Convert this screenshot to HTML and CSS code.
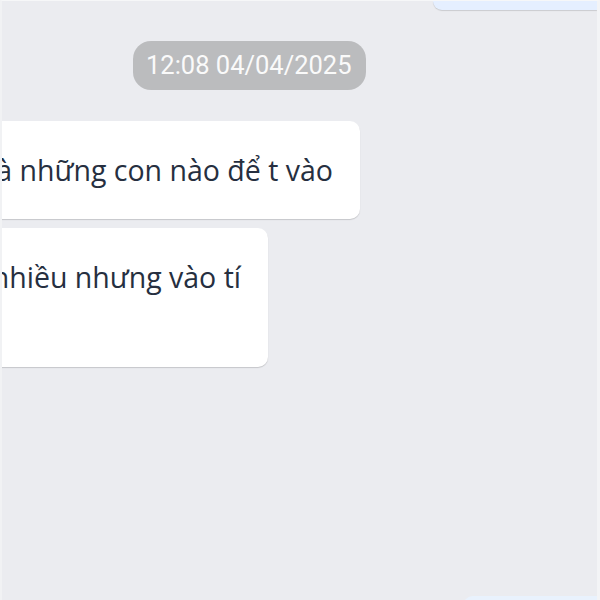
FILE: index.html
```html
<!DOCTYPE html>
<html lang="vi">
<head>
<meta charset="utf-8">
<title>Chat</title>
<link rel="stylesheet" href="styles.css">
</head>
<body>
<div class="chat">
  <div class="row row-end top-row">
    <div class="bubble-self top-bubble"></div>
  </div>
  <div class="time-row">
    <span class="time">12:08 04/04/2025</span>
  </div>
  <div class="row msg-row first">
    <div class="bubble">thế mấy con đấy là những con nào để t vào</div>
  </div>
  <div class="row msg-row second">
    <div class="bubble">t chưa biết nhiều nhưng vào tí<br>thôi</div>
  </div>
  <div class="spacer"></div>
  <div class="row row-end bottom-row">
    <div class="bubble-self bottom-bubble"></div>
  </div>
</div>
</body>
</html>
```
FILE: styles.css
```css
html, body {
  margin: 0;
  padding: 0;
}
body {
  width: 600px;
  height: 600px;
  overflow: hidden;
  background: #ebecf0;
  font-family: Roboto, "Noto Sans", sans-serif;
}
.chat {
  width: 600px;
  height: 600px;
  display: flex;
  flex-direction: column;
  box-sizing: border-box;
  border-right: 3px solid #f3f4f6;
  border-left: 2px solid #f1f2f4;
  border-top: 1px solid #f6f7f8;
  overflow: hidden;
}
.row {
  display: flex;
}
.row-end {
  justify-content: flex-end;
}
.bubble-self {
  background: #e5efff;
  box-shadow: 0 1px 1px rgba(0, 0, 0, 0.14);
}
.top-bubble {
  width: 164px;
  height: 9px;
  border-radius: 0 0 0 10px;
}
.time-row {
  display: flex;
  padding-left: 131px;
  margin-top: 31px;
}
.time {
  display: inline-block;
  background: #bbbcbe;
  color: #fafafa;
  font-size: 25.5px;
  line-height: 49px;
  height: 49px;
  padding: 0 14px 0 13px;
  border-radius: 18px;
}
.msg-row {
  justify-content: flex-end;
}
.first {
  width: 358px;
  margin-top: 31px;
}
.second {
  width: 266px;
  margin-top: 9px;
}
.bubble {
  flex-shrink: 0;
  white-space: nowrap;
  background: #ffffff;
  color: #262f40;
  font-family: "Open Sans", "Noto Sans", sans-serif;
  font-size: 28.5px;
  line-height: 41px;
  padding: 28.5px 27px 28.5px 20px;
  border-radius: 10px;
  box-shadow: 0 1px 1px rgba(0, 0, 0, 0.16);
}
.spacer {
  flex: 1;
}
.bottom-row {
  padding-left: 461px;
  justify-content: flex-start;
  margin-bottom: -6px;
}
.bottom-bubble {
  flex: 1;
  height: 10px;
  border-radius: 10px 0 0 0;
  background: #e9f2fd;
  box-shadow: none;
}
```
